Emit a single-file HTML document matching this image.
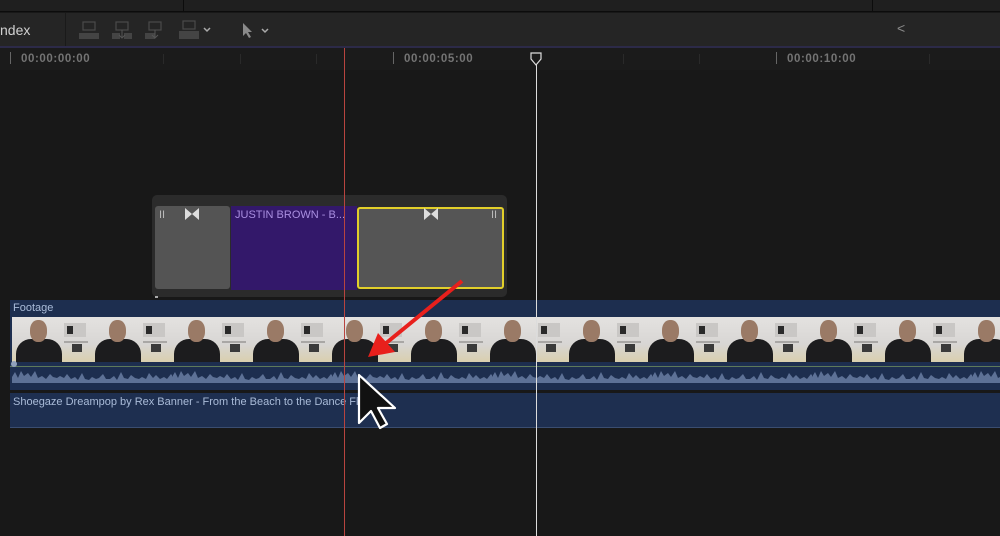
<!DOCTYPE html>
<html><head><meta charset="utf-8"><style>
*{margin:0;padding:0;box-sizing:border-box}
body{width:1000px;height:536px;overflow:hidden;background:#181818;font-family:"Liberation Sans",sans-serif;position:relative}
.a{position:absolute}
.tc{color:#747474;font-size:11.5px;letter-spacing:0.6px;font-weight:bold}
.th{position:absolute;top:0;width:79px;height:45px;background:linear-gradient(180deg,#e4e2e0 0%,#d8d6d4 60%,#d9cfae 100%);overflow:hidden}
.th .hd{position:absolute;left:18px;top:3px;width:17px;height:22px;border-radius:45%;background:#9a7a66}
.th .bd{position:absolute;left:4px;top:22px;width:46px;height:26px;border-radius:15px 15px 0 0;background:#1c1c1e}
.th .s1{position:absolute;left:52px;top:6px;width:22px;height:14px;background:#c9c7c5}
.th .s2{position:absolute;left:55px;top:9px;width:6px;height:8px;background:#2a2a2a}
.th .s3{position:absolute;left:52px;top:24px;width:24px;height:2px;background:#a9a7a5}
.th .s4{position:absolute;left:60px;top:27px;width:10px;height:8px;background:#3a3a3a}
</style></head><body>
<div class="a" style="left:0;top:0;width:1000px;height:12px;background:#1f1f1f;border-bottom:1px solid #0c0c0c"></div>
<div class="a" style="left:183px;top:0;width:1px;height:12px;background:#0c0c0c"></div>
<div class="a" style="left:872px;top:0;width:1px;height:12px;background:#0c0c0c"></div>
<div class="a" style="left:0;top:13px;width:1000px;height:33px;background:#252525"></div>
<div class="a" style="left:65px;top:13px;width:1px;height:33px;background:#1a1a1a"></div>
<div class="a" style="left:0;top:22px;color:#d0d0d0;font-size:14px">ndex</div>
<svg class="a" style="left:75px;top:18px" width="200" height="24" viewBox="0 0 200 24">
<g fill="none" stroke="#4a4a4a" stroke-width="1.2"><rect x="8" y="4" width="12" height="8"/><rect x="41" y="4" width="12" height="8"/><rect x="74" y="4" width="12" height="8"/><rect x="108" y="3" width="12" height="8"/></g>
<g fill="#444"><rect x="4" y="15" width="20" height="6"/><rect x="37" y="15" width="8" height="6"/><rect x="49" y="15" width="8" height="6"/><rect x="70" y="15" width="10" height="6"/><rect x="104" y="13" width="20" height="8"/></g>
<path d="M47 12v8M44 17l3 3 3-3M80 12v8M77 17l3 3 3-3" stroke="#555" fill="none"/>
<path d="M129 10l3 3 3-3" stroke="#aaa" stroke-width="1.5" fill="none"/>
<path d="M168 5v13l3-3 3 5 2-1-3-5h4z" fill="#8a8a8a"/>
<path d="M187 11l3 3 3-3" stroke="#aaa" stroke-width="1.5" fill="none"/>
</svg>
<div class="a" style="left:897px;top:20px;color:#8a8a8a;font-size:14px">&lt;</div>
<div class="a" style="left:0;top:46px;width:1000px;height:2px;background:#2c2a48"></div>
<div class="a" style="left:0;top:48px;width:1000px;height:22px;background:#1b1b1b"></div>
<div class="a" style="left:10px;top:52px;width:1px;height:12px;background:#666"></div>
<div class="a" style="left:393px;top:52px;width:1px;height:12px;background:#666"></div>
<div class="a" style="left:776px;top:52px;width:1px;height:12px;background:#666"></div>
<div class="a tc" style="left:21px;top:53px">00:00:00:00</div>
<div class="a tc" style="left:404px;top:53px">00:00:05:00</div>
<div class="a tc" style="left:787px;top:53px">00:00:10:00</div>
<div class="a" style="left:163px;top:54px;width:1px;height:10px;background:#2a2a2a"></div>
<div class="a" style="left:240px;top:54px;width:1px;height:10px;background:#2a2a2a"></div>
<div class="a" style="left:316px;top:54px;width:1px;height:10px;background:#2a2a2a"></div>
<div class="a" style="left:623px;top:54px;width:1px;height:10px;background:#2a2a2a"></div>
<div class="a" style="left:699px;top:54px;width:1px;height:10px;background:#2a2a2a"></div>
<div class="a" style="left:929px;top:54px;width:1px;height:10px;background:#2a2a2a"></div>
<div class="a" style="left:152px;top:195px;width:355px;height:102px;background:#2b2b2b;border-radius:5px"></div>
<div class="a" style="left:155px;top:206px;width:75px;height:83px;background:#545454;border-radius:3px"></div>
<div class="a" style="left:231px;top:206px;width:126px;height:84px;background:#33186a"></div>
<div class="a" style="left:235px;top:209px;color:#a98ee0;font-size:11px">JUSTIN BROWN - B...</div>
<div class="a" style="left:357px;top:207px;width:147px;height:82px;background:#555;border:2px solid #e2cf2a;border-radius:3px"></div>
<div class="a" style="left:159px;top:209px;color:#bbb;font-size:11px">II</div>
<div class="a" style="left:491px;top:209px;color:#bbb;font-size:11px">II</div>
<svg class="a" style="left:185px;top:208px" width="14" height="12"><path d="M0 0l7 6-7 6zM14 0l-7 6 7 6z" fill="#ddd"/></svg>
<svg class="a" style="left:424px;top:208px" width="14" height="12"><path d="M0 0l7 6-7 6zM14 0l-7 6 7 6z" fill="#ddd"/></svg>
<div class="a" style="left:155px;top:296px;width:3px;height:2px;background:#aaa"></div>
<div class="a" style="left:10px;top:300px;width:990px;height:90px;background:#1d2e4f"></div>
<div class="a" style="left:13px;top:302px;color:#a9bbd8;font-size:11px">Footage</div>
<div class="a" style="left:12px;top:317px;width:988px;height:45px;overflow:hidden">
<div class="th" style="left:0"><div class="s1"></div><div class="s2"></div><div class="s3"></div><div class="s4"></div><div class="bd"></div><div class="hd"></div></div>
<div class="th" style="left:79px"><div class="s1"></div><div class="s2"></div><div class="s3"></div><div class="s4"></div><div class="bd"></div><div class="hd"></div></div>
<div class="th" style="left:158px"><div class="s1"></div><div class="s2"></div><div class="s3"></div><div class="s4"></div><div class="bd"></div><div class="hd"></div></div>
<div class="th" style="left:237px"><div class="s1"></div><div class="s2"></div><div class="s3"></div><div class="s4"></div><div class="bd"></div><div class="hd"></div></div>
<div class="th" style="left:316px"><div class="s1"></div><div class="s2"></div><div class="s3"></div><div class="s4"></div><div class="bd"></div><div class="hd"></div></div>
<div class="th" style="left:395px"><div class="s1"></div><div class="s2"></div><div class="s3"></div><div class="s4"></div><div class="bd"></div><div class="hd"></div></div>
<div class="th" style="left:474px"><div class="s1"></div><div class="s2"></div><div class="s3"></div><div class="s4"></div><div class="bd"></div><div class="hd"></div></div>
<div class="th" style="left:553px"><div class="s1"></div><div class="s2"></div><div class="s3"></div><div class="s4"></div><div class="bd"></div><div class="hd"></div></div>
<div class="th" style="left:632px"><div class="s1"></div><div class="s2"></div><div class="s3"></div><div class="s4"></div><div class="bd"></div><div class="hd"></div></div>
<div class="th" style="left:711px"><div class="s1"></div><div class="s2"></div><div class="s3"></div><div class="s4"></div><div class="bd"></div><div class="hd"></div></div>
<div class="th" style="left:790px"><div class="s1"></div><div class="s2"></div><div class="s3"></div><div class="s4"></div><div class="bd"></div><div class="hd"></div></div>
<div class="th" style="left:869px"><div class="s1"></div><div class="s2"></div><div class="s3"></div><div class="s4"></div><div class="bd"></div><div class="hd"></div></div>
<div class="th" style="left:948px"><div class="s1"></div><div class="s2"></div><div class="s3"></div><div class="s4"></div><div class="bd"></div><div class="hd"></div></div>
</div>
<div class="a" style="left:10px;top:366px;width:990px;height:1px;background:#5e7a5a"></div>
<svg class="a" style="left:12px;top:367px" width="988" height="16" viewBox="0 0 988 16" preserveAspectRatio="none">
<defs><pattern id="w" width="160" height="16" patternUnits="userSpaceOnUse"><path d="M0 16V10l3-5 3 6 3-7 3 5 4-3 3 4 4-6 3 7 4-2 4 3 4-5 3 3 4 1 3-2 4 2 3-4 4 5 4-2 3 3 4-7 3 6 4 1 3-3 4 2 3-1 4-4 3 5 4 0 4-3 3 4 4-8 3 6 4 1 3-4 4 3 4 1 3-2 4 2 3-6 4 5 3-3 4 4 4-2 3 2 4-5 3 4 4 1 3-3 4-2 3 4 4 0 4-6 3 7 3-2 4 1 3-3 4 2 4 2v6z" fill="#5d7196"/></pattern></defs>
<rect width="988" height="16" fill="url(#w)"/></svg>
<div class="a" style="left:11px;top:361px;width:6px;height:6px;border-radius:50%;background:#8fa0bb"></div>
<div class="a" style="left:10px;top:393px;width:990px;height:35px;background:#1e2f50;border-bottom:1px solid #3a4d70"></div>
<div class="a" style="left:13px;top:396px;color:#a9bbd8;font-size:11px">Shoegaze Dreampop by Rex Banner - From the Beach to the Dance Floor</div>
<div class="a" style="left:344px;top:48px;width:1px;height:488px;background:#b8443f"></div>
<div class="a" style="left:536px;top:60px;width:1px;height:476px;background:#dcdcdc"></div>
<svg class="a" style="left:530px;top:52px" width="13" height="14"><path d="M1 1h10v6l-5 6-5-6z" fill="#1b1b1b" stroke="#ddd" stroke-width="1.2"/></svg>
<svg class="a" style="left:0;top:0" width="1000" height="536">
<line x1="462" y1="281" x2="385" y2="344" stroke="#e8201c" stroke-width="4"/>
<path d="M368 357l10-24 17 19z" fill="#e8201c"/>
<path d="M359 375v48l12-12 9 17 7-4-9-16h17z" fill="#111" stroke="#fff" stroke-width="2.2" stroke-linejoin="round"/>
</svg>
</body></html>
